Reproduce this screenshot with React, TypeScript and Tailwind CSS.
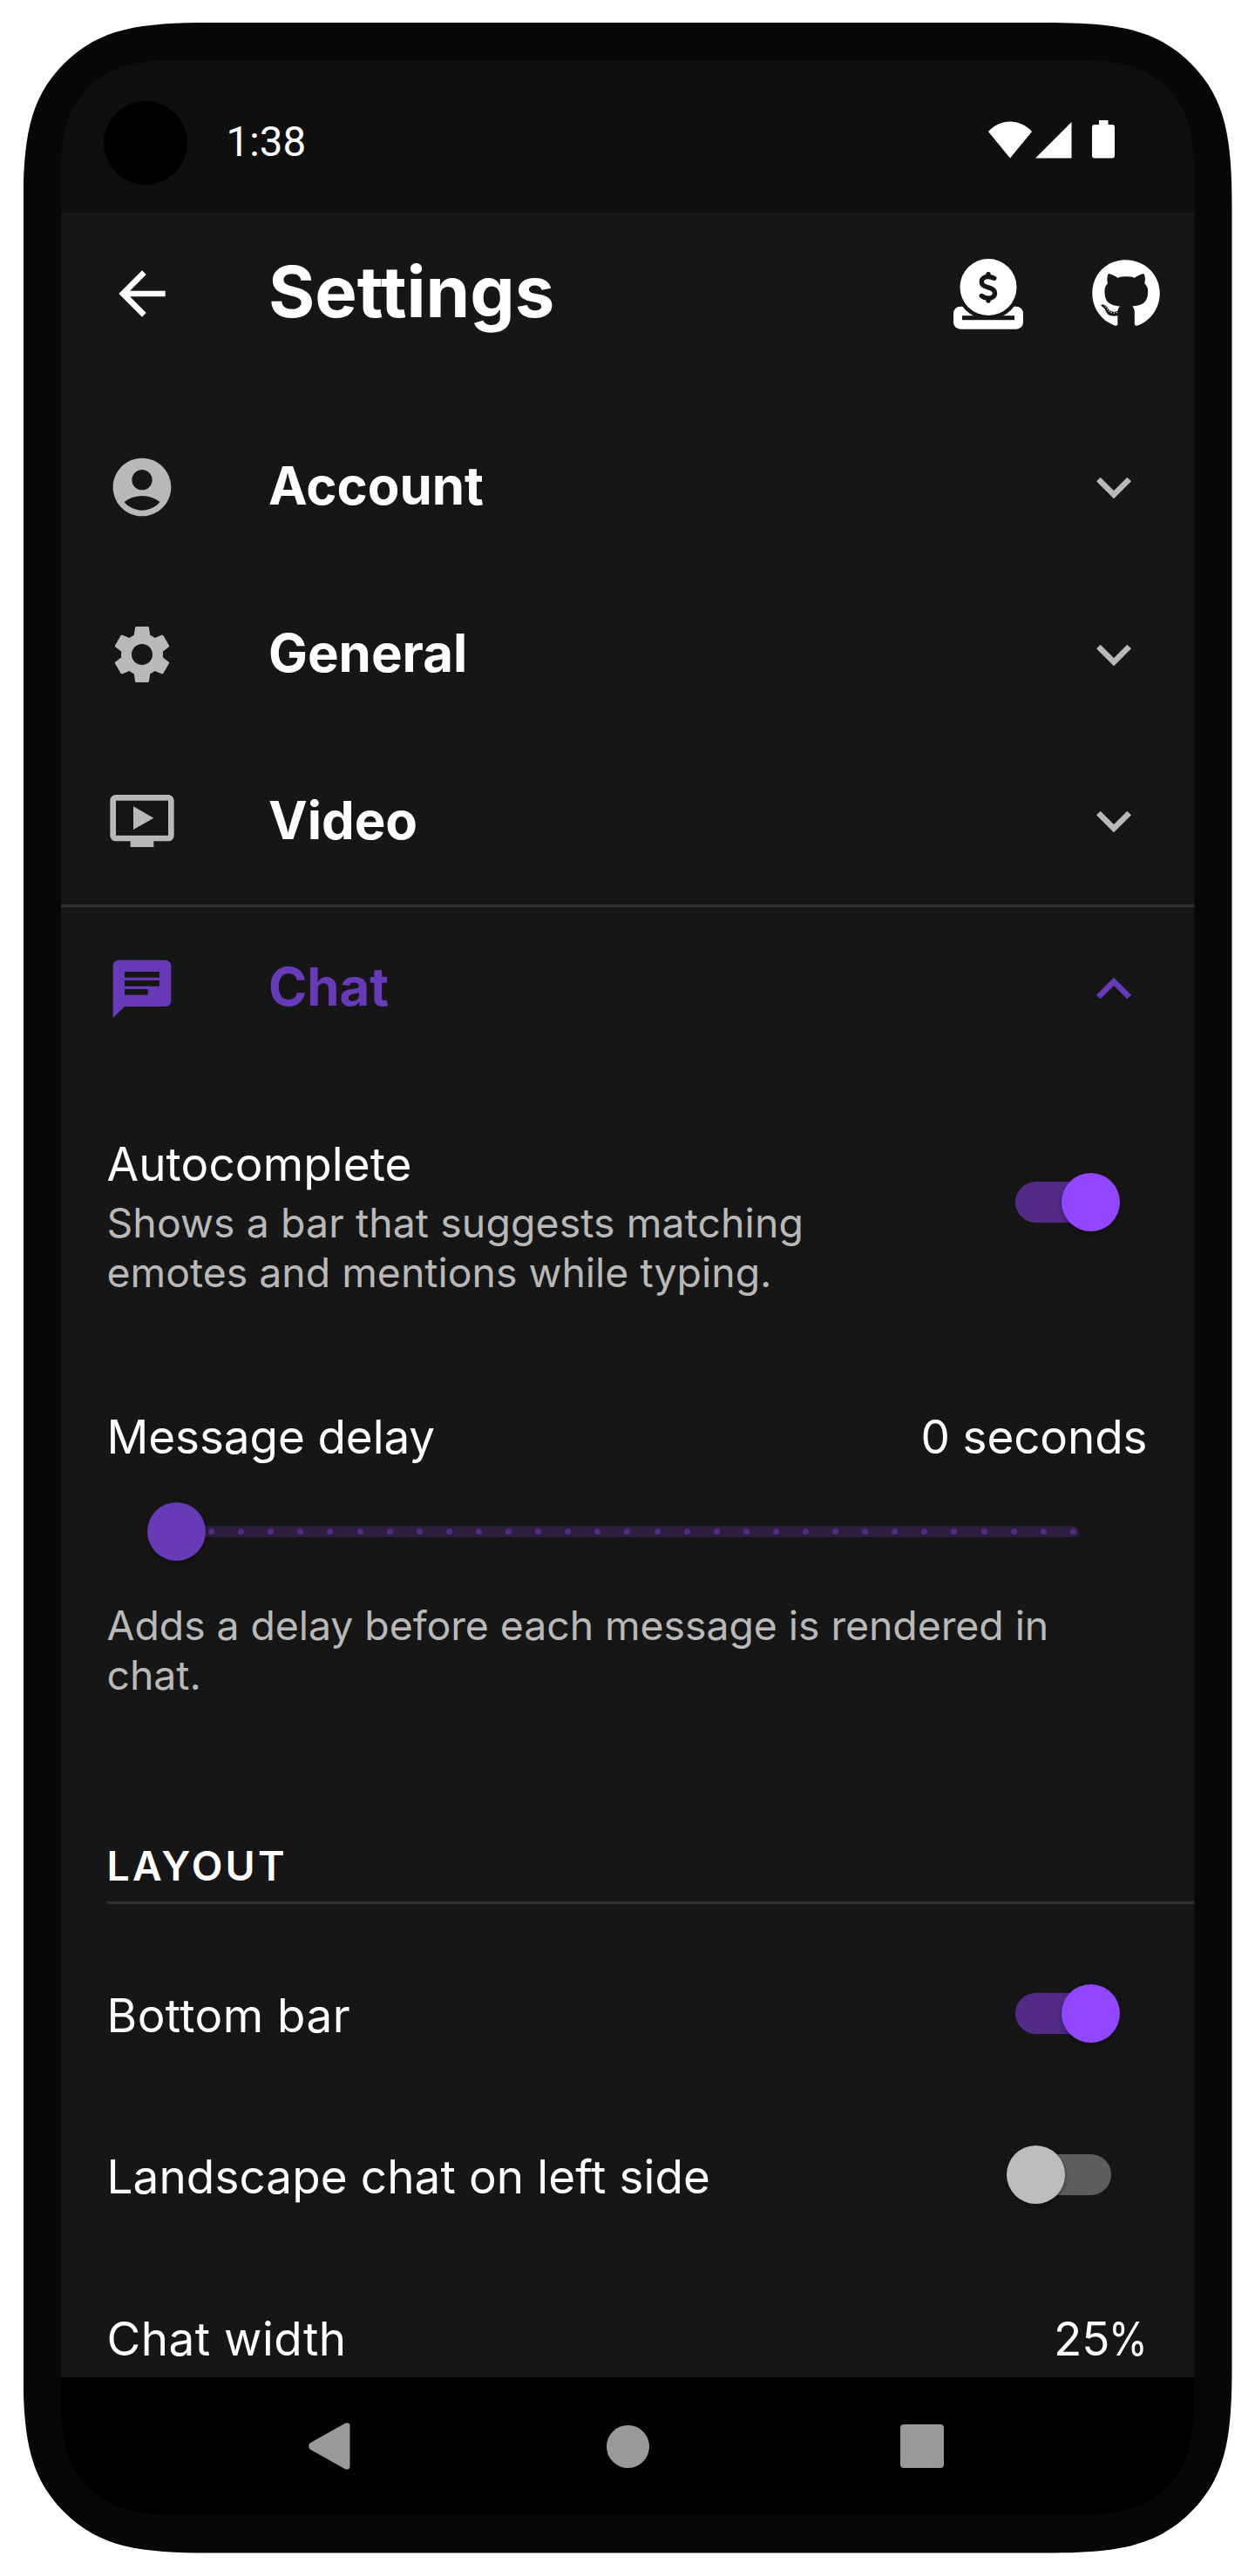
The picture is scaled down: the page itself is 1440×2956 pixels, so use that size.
import React from "react";
import {
  MdArrowBack,
  MdAccountCircle,
  MdSettings,
  MdOndemandVideo,
  MdChat,
  MdExpandMore,
  MdExpandLess,
} from "react-icons/md";
import { FaGithub } from "react-icons/fa";
import type { IconType } from "react-icons";

function DonateIcon() {
  return (
    <svg className="mt-px h-[81px] w-[80px]" viewBox="0 0 80 81" fill="none">
      <rect x="0" y="54.7" width="80" height="26" rx="8" fill="#fff" />
      <circle cx="40" cy="32.5" r="37" fill="#161616" />
      <rect x="10" y="65.2" width="60" height="5" fill="#161616" />
      <circle cx="40" cy="32.5" r="32.5" fill="#fff" />
      <path
        d="M46.8 22.300C44 20.900 42 20.500 40 20.500C35 20.500 32.300 23 32.300 26.300C32.300 30.500 35.500 31.500 40 32.800C44.500 34 47.500 35.500 47.500 39.300C47.500 43 44.500 45.300 40 45.300C37 45.300 34.500 44.200 32.300 42.500M40 17.600V20.500M40 45.300V48"
        stroke="#161616"
        strokeWidth="5.4"
        strokeLinecap="round"
        strokeLinejoin="round"
      />
    </svg>
  );
}

function StatusBar() {
  return (
    <div className="flex h-[175px] shrink-0 items-center bg-[#0f0f0f] pl-[49.5px] pr-[92px] pt-[14px]">
      <div className="size-[96px] rounded-full bg-black" />
      <span className="ml-[44.5px] font-[Roboto] text-[47.5px] leading-none text-white">1:38</span>
      <div className="ml-auto mt-[-8px] flex items-start text-white">
        <svg className="mt-[1px] h-[43px] w-[50px]" viewBox="0 0 50 43" fill="currentColor">
          <path d="M0 12C7 4.500 15.500 .5 25 .5S43 4.500 50 12L25 42.500z" />
        </svg>
        <svg className="ml-[4px] mt-[2px] h-[42px] w-[42px]" viewBox="0 0 42 42" fill="currentColor">
          <path d="M0 41.500L41.500 0V41.500z" />
        </svg>
        <svg className="ml-[23px] h-[44px] w-[26px]" viewBox="0 0 26 44" fill="currentColor">
          <path d="M8 0h10.500v5h4.500q3 0 3 3v32.500q0 3-3 3h-20q-3 0-3-3V8q0-3 3-3h5z" />
        </svg>
      </div>
    </div>
  );
}

function AppBar() {
  return (
    <header className="flex h-[185px] shrink-0 items-center pl-[53px] text-white">
      <MdArrowBack className="size-[80px]" />
      <h1 className="ml-[105.500px] mt-[-3px] text-[81.4px] font-bold leading-none">Settings</h1>
      <div className="ml-auto flex items-center">
        <div className="flex w-[158px] justify-center">
          <DonateIcon />
        </div>
        <div className="flex w-[158px] justify-center">
          <FaGithub className="size-[80px]" />
        </div>
      </div>
    </header>
  );
}

function SectionTile({ icon: Icon, label, open = false }: { icon: IconType; label: string; open?: boolean }) {
  const Chevron = open ? MdExpandLess : MdExpandMore;
  return (
    <div
      className={
        open
          ? "flex h-[192px] shrink-0 items-center border-t-[3px] border-[#313131] pl-[53px] pr-[52.5px] pb-[2px] text-[#673ab7]"
          : "flex h-[191.8px] shrink-0 items-center pl-[53px] pr-[52.5px] text-[#b9b9b9]"
      }
    >
      <Icon className="size-[80px]" />
      <span
        className={
          open
            ? "ml-[105.500px] mt-[-3px] text-[59.9px] font-bold leading-none"
            : "ml-[105.500px] mt-[-2px] text-[59.9px] font-bold leading-none text-white"
        }
      >
        {label}
      </span>
      <Chevron className="ml-auto size-[80px]" />
    </div>
  );
}

function Toggle({ on }: { on: boolean }) {
  return (
    <div
      className={
        on
          ? "relative mr-[95.500px] h-[47px] w-[110px] shrink-0 rounded-full bg-[#522b86]"
          : "relative mr-[95.500px] h-[47px] w-[110px] shrink-0 rounded-full bg-[#5d5d5d]"
      }
    >
      <div
        className={
          on
            ? "absolute left-[53px] top-[-10px] size-[67px] rounded-full bg-[#9146ff] shadow-[0_3px_6px_rgba(0,0,0,0.35)]"
            : "absolute left-[-10px] top-[-10px] size-[67px] rounded-full bg-[#bdbdbd] shadow-[0_3px_6px_rgba(0,0,0,0.35)]"
        }
      />
    </div>
  );
}

function Slider() {
  const ticks = Array.from({ length: 31 }, (_, i) => i);
  return (
    <div className="relative ml-[79.500px] mt-[42.500px] flex h-[67px] w-[1036px] items-center">
      <div className="flex h-[13px] w-full items-center justify-between rounded-full bg-[#2c1f3c] px-[3px]">
        {ticks.map((t) => (
          <span key={t} className="size-[7px] rounded-full bg-[#522b86]" />
        ))}
      </div>
      <div className="absolute left-[-33.5px] top-0 size-[67px] rounded-full bg-[#673ab7] shadow-[0_3px_6px_rgba(0,0,0,0.35)]" />
    </div>
  );
}

export default function App() {
  return (
    <div className="h-[2956px] w-[1440px] overflow-hidden bg-white pl-[26.5px] pt-[26px] font-[Inter,sans-serif] [font-variant-ligatures:none]">
      <div className="h-[2903.500px] w-[1387px] bg-[#070707] p-[43px] [clip-path:path('M0_215C0_135_6_88_47_47C88_6_135_0_215_0H1172C1252_0_1299_6_1340_47C1381_88_1387_135_1387_215V2688.5C1387_2768.5_1381_2815.5_1340_2856.5C1299_2897.5_1252_2903.5_1172_2903.5H215C135_2903.5_88_2897.5_47_2856.5C6_2815.5_0_2768.5_0_2688.5Z')]">
        <div className="flex h-[2817.500px] w-[1301px] flex-col overflow-hidden bg-[#161616] text-white [clip-path:path('M0_145C0_92_4_60_32_32C60_4_92_0_145_0H1156C1209_0_1241_4_1269_32C1297_60_1301_92_1301_145V2672.5C1301_2725.5_1297_2757.5_1269_2785.5C1241_2813.5_1209_2817.5_1156_2817.5H145C92_2817.5_60_2813.5_32_2785.5C4_2757.5_0_2725.5_0_2672.5Z')]">
          <StatusBar />
          <AppBar />
          <main className="flex min-h-0 flex-1 flex-col overflow-hidden pt-[34px] text-[53px] leading-[64px]">
            <SectionTile icon={MdAccountCircle} label="Account" />
            <SectionTile icon={MdSettings} label="General" />
            <SectionTile icon={MdOndemandVideo} label="Video" />
            <SectionTile icon={MdChat} label="Chat" open />

            <div className="mt-[74px] flex items-center pl-[53px]">
              <div className="w-[900px]">
                <div className="tracking-[0.1px]">Autocomplete</div>
                <p className="mt-[7px] text-[46.4px] leading-[57px] text-[#b9b9b9]">
                  <span className="tracking-[0.1px]">Shows a bar that suggests matching</span>
                  <br />
                  emotes and mentions while typing.
                </p>
              </div>
              <div className="ml-auto mt-[-35px]">
                <Toggle on />
              </div>
            </div>

            <div className="mt-[128px] flex justify-between pl-[53px] pr-[54px]">
              <span className="tracking-[-0.1px]">Message delay</span>
              <span className="tracking-[-0.1px]">0 seconds</span>
            </div>
            <div className="pl-[53px]">
              <Slider />
              <p className="mt-[46px] text-[46.4px] leading-[57px] tracking-[-0.06px] text-[#b9b9b9]">
                Adds a delay before each message is rendered in
                <br />
                chat.
              </p>
              <div className="mt-[162.500px] border-b-[3px] border-[#313131] pb-[13px] text-[46.4px] font-semibold leading-[56px] tracking-[3.2px]">
                LAYOUT
              </div>
            </div>

            <div className="mt-[95.500px] flex items-center justify-between pl-[53px]">
              <span className="tracking-[0.45px]">Bottom bar</span>
              <div className="mt-[-5px]">
                <Toggle on />
              </div>
            </div>
            <div className="mt-[121.500px] flex items-center justify-between pl-[53px]">
              <span className="tracking-[0.1px]">Landscape chat on left side</span>
              <div className="mt-[-5px]">
                <Toggle on={false} />
              </div>
            </div>
            <div className="mt-[122px] flex justify-between pl-[53px] pr-[54px]">
              <span className="tracking-[0.500px]">Chat width</span>
              <span className="flex">
                25<span className="ml-[-1px] mr-[-8px] origin-left scale-x-[0.86]">%</span>
              </span>
            </div>
          </main>
          <nav className="flex h-[159px] shrink-0 items-center bg-black pl-[284px] text-[#999]">
            <svg className="h-[54px] w-[48px]" viewBox="0 0 48 54" fill="currentColor">
              <path d="M1.500 23.500L42 .8Q47.500-1 47.500 4.500V49.500Q47.500 55 42 53.200L1.500 30.500Q-1 27 1.500 23.500z" />
            </svg>
            <div className="ml-[294.500px] size-[49px] rounded-full bg-[#999]" />
            <div className="ml-[288px] size-[50px] rounded-[4px] bg-[#999]" />
          </nav>
        </div>
      </div>
    </div>
  );
}
